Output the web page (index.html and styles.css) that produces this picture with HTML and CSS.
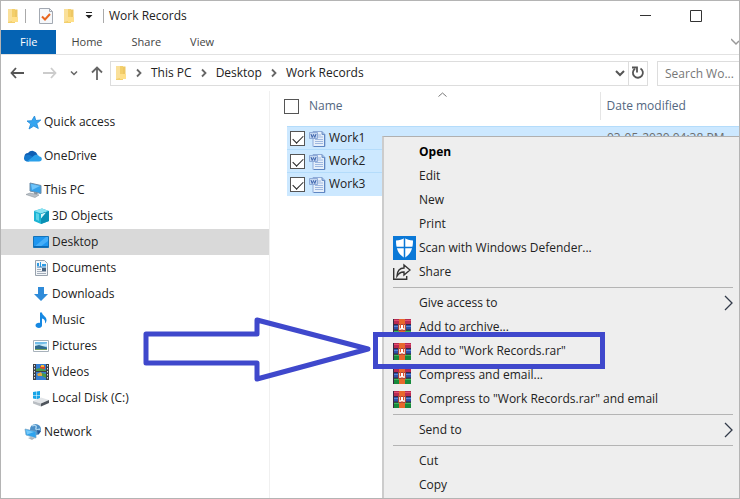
FILE: index.html
```html
<!DOCTYPE html>
<html lang="en">
<head>
    <meta charset="UTF-8">
    <meta name="viewport" content="width=device-width, initial-scale=1.0">
    <title>Work Records</title>
    <link rel="stylesheet" href="styles.css">
</head>
<body>
    <!-- shared icons -->
    <svg class="defs" width="0" height="0" aria-hidden="true">
        <symbol id="folder" viewBox="0 0 12 16">
            <path d="M1 1h7v14H1z" fill="#f3cf6b"/>
            <path d="M8 1.5h2.5v9L8 13z" fill="#eec763"/>
            <path d="M1 1h4v12L1 14z" fill="#fae09a"/>
            <path d="M5 9h6v5H5z" fill="#ffe08a"/>
        </symbol>
        <symbol id="word" viewBox="0 0 17 17">
            <path d="M4 1.5h9l3 3v12H4z" fill="#e6effa" stroke="#8fabd8"/>
            <path d="M13 1.5v3h3" fill="#9bb8e0" stroke="#6f92c8"/>
            <path d="M9 5h3M9 7h5M6 9.500h8M6 11.500h8M6 13.500h8" stroke="#9fb8e0"/>
            <path d="M15.500 5v11.500H5" fill="none" stroke="#5f86c2"/>
            <path d="M0.500 2.500h8v6h-8z" fill="#c4d6f0" stroke="#8fabd8"/>
            <path d="M2 4l1.200 3.500L4.500 4.500 5.800 7.500 7 4" fill="none" stroke="#3f66ae"/>
        </symbol>
        <symbol id="rar" viewBox="0 0 18 17">
            <path d="M0 0h18v6H0z" fill="#b92a52"/>
            <path d="M0 1h18v1H0z" fill="#e0506f"/>
            <path d="M0 6h18v5H0z" fill="#2b50a8"/>
            <path d="M0 7h18v1H0z" fill="#5b84d4"/>
            <path d="M0 11h18v6H0z" fill="#178a3c"/>
            <path d="M0 12h18v1H0z" fill="#3fb55c"/>
            <path d="M0 5.500h18M0 11h18M.5 0v17" stroke="#3b2740"/>
            <path d="M6 0h6v17H6z" fill="#e8682c"/>
            <path d="M5 5h8v7H5z" fill="#a5483c"/>
            <path d="M6 6h6v5H6z" fill="#f0d6cc"/>
            <path d="M7.500 5v4M9 7v5M10.500 5v4" stroke="#e2502c"/>
            <path d="M9 6v4" stroke="#fff" stroke-width="2"/>
        </symbol>
        <symbol id="crumb" viewBox="0 0 8 10">
            <path d="M2 1.500L5.500 5 2 8.500" fill="none" stroke="#666" stroke-width="1.800"/>
        </symbol>
        <symbol id="down" viewBox="0 0 10 8">
            <path d="M1 2l4 4 4-4" fill="none" stroke="currentColor" stroke-width="2"/>
        </symbol>
        <symbol id="more" viewBox="0 0 9 16">
            <path d="M1 1l7 7-7 7" fill="none" stroke="#333b4a" stroke-width="1.300"/>
        </symbol>
    </svg>

    <div class="window">
        <header class="titlebar">
            <svg width="12" height="16"><use href="#folder"/></svg>
            <span class="divider"></span>
            <button class="quick" aria-label="Properties">
                <svg width="14" height="16" viewBox="0 0 14 16">
                    <path d="M.5.5h10l3 3v12H.5z" fill="#f6f8fb" stroke="#a3a9b2"/>
                    <path d="M10.500.5v3h3" fill="none" stroke="#a3a9b2"/>
                    <path d="M3 8.500l3 3L11 6" fill="none" stroke="#e8661f" stroke-width="2"/>
                </svg>
            </button>
            <button class="quick" aria-label="New folder"><svg width="12" height="16"><use href="#folder"/></svg></button>
            <button class="quick" aria-label="Customize toolbar">
                <svg width="8" height="7" viewBox="0 0 8 7"><path d="M1 .5h6" stroke="#222"/><path d="M.5 3h7L4 6.500z" fill="#222"/></svg>
            </button>
            <span class="divider last"></span>
            <h1>Work Records</h1>
            <div class="controls">
                <button aria-label="Minimize"><svg width="12" height="12" viewBox="0 0 12 12"><path d="M0 5.500h11" stroke="#333"/></svg></button>
                <button aria-label="Maximize"><svg width="12" height="12" viewBox="0 0 12 12"><path d="M.5.5h11v11H.5z" fill="none" stroke="#333"/></svg></button>
            </div>
        </header>

        <nav class="tabs">
            <button class="tab file">File</button>
            <button class="tab">Home</button>
            <button class="tab">Share</button>
            <button class="tab">View</button>
            <button class="expand" aria-label="Expand ribbon">
                <svg width="8" height="8" viewBox="0 0 8 8"><path d="M0 1l5 5 3-3" fill="none" stroke="#999" stroke-width="1.500"/></svg>
            </button>
        </nav>

        <div class="toolbar">
            <div class="history">
                <button aria-label="Back"><svg width="15" height="12" viewBox="0 0 15 12"><path d="M14 6H2M6 1L1.500 6 6 11" fill="none" stroke="#555" stroke-width="1.800"/></svg></button>
                <button aria-label="Forward"><svg width="15" height="12" viewBox="0 0 15 12"><path d="M1 6h12M9 1l4.500 5L9 11" fill="none" stroke="#ccc" stroke-width="1.800"/></svg></button>
                <button aria-label="Recent locations"><svg class="recent" width="8" height="6"><use href="#down"/></svg></button>
                <button aria-label="Up"><svg width="12" height="14" viewBox="0 0 12 14"><path d="M6 14V2M1 6.500L6 1.500l5 5" fill="none" stroke="#666" stroke-width="1.800"/></svg></button>
            </div>
            <div class="address">
                <svg width="12" height="16"><use href="#folder"/></svg>
                <svg class="crumb" width="8" height="10"><use href="#crumb"/></svg>
                <a href="#">This PC</a>
                <svg class="crumb" width="8" height="10"><use href="#crumb"/></svg>
                <a href="#">Desktop</a>
                <svg class="crumb" width="8" height="10"><use href="#crumb"/></svg>
                <a href="#">Work Records</a>
                <button class="drop" aria-label="Previous locations"><svg width="10" height="8"><use href="#down"/></svg></button>
                <button class="refresh" aria-label="Refresh">
                    <svg width="14" height="14" viewBox="0 0 14 14"><path d="M9.500 2.500A5 5 0 1 1 4 2.700" fill="none" stroke="#555" stroke-width="1.800"/><path d="M1 1.500h5v5" fill="none" stroke="#555" stroke-width="1.800"/></svg>
                </button>
            </div>
            <input class="search" type="text" placeholder="Search Wo..." aria-label="Search Work Records">
        </div>

        <div class="content">
            <aside class="sidebar">
                <a href="#" class="place">
                    <svg width="18" height="18" viewBox="0 0 18 18"><path d="M10.500 3l1.300 4.500 5-.5-4 3.600 1.500 4.900-4.500-2.500L5 16l1.700-5L3 8l4.700-.3z" fill="#36a5f0" stroke="#2088d8" stroke-width=".8"/></svg>
                    Quick access
                </a>
                <a href="#" class="place group">
                    <svg width="18" height="18" viewBox="0 0 18 18"><path d="M4 13a3.500 3.500 0 0 1 0-7 5.500 5.500 0 0 1 9.500 1.500L9 12z" fill="#0f5fb4"/><path d="M2.500 14.500A3.300 3.300 0 0 1 3 8c2-.8 4 .5 6 2l-4 4.500z" fill="#1478cc"/><path d="M3 14.500L8.500 10C11 7 14 7.500 15 9.300c4 .7 3.500 5.200 0 5.200z" fill="#2aa0ea"/></svg>
                    OneDrive
                </a>
                <a href="#" class="place group">
                    <svg width="18" height="18" viewBox="0 0 18 18"><path d="M6 2l11 2.500v8L6 10z" fill="#35a1ea" stroke="#6c8ca8"/><path d="M7 3l9 2-8 4z" fill="#71c5fa"/><path d="M2 13.500l4-1.500 9 2-4 2.500z" fill="#b9c0c7" stroke="#8e979f" stroke-width=".6"/><path d="M10 11l4 1-1 1.500-3-.7z" fill="#87949f"/></svg>
                    This PC
                </a>
                <a href="#" class="place child">
                    <svg width="18" height="18" viewBox="0 0 18 18"><path d="M2 4l8-2.500L17 4v10l-8 3-7-3z" fill="#1cb4d4"/><path d="M2 4l8-2.500L17 4 9 6.500z" fill="#8be3f2"/><path d="M9 6.500L17 4v10l-8 3z" fill="#0a90b4"/><path d="M4 6l3 1v7l-3-1.500z" fill="#5bd3e8"/><path d="M9 7l5-1.500-5 6z" fill="#d8f6fa"/></svg>
                    3D Objects
                </a>
                <a href="#" class="place child selected">
                    <svg width="18" height="18" viewBox="0 0 18 18"><path d="M1.500 3.500h15v11h-15z" fill="#1e96f0" stroke="#1472b8"/><path d="M2 14L14 4h2v4L8 14z" fill="#45aef8"/><path d="M2 13.500h14" stroke="#0b68b4"/></svg>
                    Desktop
                </a>
                <a href="#" class="place child">
                    <svg width="18" height="18" viewBox="0 0 18 18"><path d="M3.500 1.500h9l3 3v12h-12z" fill="#f3f6f9" stroke="#98a2ad"/><path d="M5 4h2v3H5zM8 3h1v5H8zM10 5h4v2h-4z" fill="#2d9be4"/><path d="M5 8h9" stroke="#2d7fc0"/><path d="M5 10.500h4M5 12.500h9M5 14.500h9" stroke="#a4aebb"/><path d="M10 9h4v3h-4z" fill="#47627e"/></svg>
                    Documents
                </a>
                <a href="#" class="place child">
                    <svg width="18" height="18" viewBox="0 0 18 18"><path d="M6 2h6v7h4l-7 7-7-7h4z" fill="#2f8bd9"/></svg>
                    Downloads
                </a>
                <a href="#" class="place child">
                    <svg width="18" height="18" viewBox="0 0 18 18"><path d="M8 1.500h2c0 3 5 4 4.500 8-.2 1.500-1 2.500-1.500 3 .6-3-.8-4.500-3-5v7c0 3.500-6.500 3-6.500 0 0-2 2.500-3 4.500-2.500z" fill="#1688e2"/></svg>
                    Music
                </a>
                <a href="#" class="place child">
                    <svg width="18" height="18" viewBox="0 0 18 18"><path d="M1.500 3.500h15v11h-15z" fill="#fff" stroke="#a8b2bb"/><path d="M3 5h12v8H3z" fill="#72bde8"/><path d="M3 7l5 .5 7-1v3H3z" fill="#cbe9f6"/><path d="M3 9l4-1 8 2.500V13H3z" fill="#306b8e"/><path d="M3 12h12v1H3z" fill="#79a35c"/></svg>
                    Pictures
                </a>
                <a href="#" class="place child">
                    <svg width="18" height="18" viewBox="0 0 18 18"><path d="M1 1h16v16H1z" fill="#3c3f46"/><path d="M4 1h10v7H4zM4 9h10v8H4z" fill="#347ed2"/><path d="M8 3h5v3H8z" fill="#d9482e"/><path d="M9 2h3v2H9z" fill="#f1ba38"/><path d="M4 6l4-1 6 2v1H4z" fill="#4d9c4a"/><path d="M5 11l4-2 2 4H6z" fill="#e8a63a"/><path d="M10 10l4 1v4l-4-2z" fill="#4a9946"/><path d="M2.500 2v15M15.500 2v15" stroke="#dce2e8" stroke-dasharray="1.500 1.500"/></svg>
                    Videos
                </a>
                <a href="#" class="place child">
                    <svg width="18" height="18" viewBox="0 0 18 18"><path d="M1 3l3-.5V6H1zM4.500 2.400L8 2v4H4.500zM1 6.500h3V10l-3-.5zM4.500 6.500H8v4l-3.500-.5z" fill="#17a5e8"/><path d="M1 12l8-3.500 8 2.500-8 3.500z" fill="#e2e5e8"/><path d="M1 12l8 2.500v3L1 14.500z" fill="#b9bec3"/><path d="M9 14.500l8-3.500v3l-8 3.500z" fill="#4f555c"/></svg>
                    Local Disk (C:)
                </a>
                <a href="#" class="place group">
                    <svg width="18" height="18" viewBox="0 0 18 18"><circle cx="11.500" cy="6.500" r="5.500" fill="#4b8fc7"/><path d="M8 3c3-2 5 0 4 2s2 2 4 1" fill="none" stroke="#a9d3ee" stroke-width="1.500"/><path d="M13 7l4 1-3 4z" fill="#285a96"/><path d="M1 6l11 2.500v6.500L2 12z" fill="#2ea3ee" stroke="#78a6c6" stroke-width=".7"/><path d="M2 7l8 2-7 2.500z" fill="#76cafa"/><path d="M4 15l3-1 4 1-3 2z" fill="#aab4bd"/></svg>
                    Network
                </a>
            </aside>

            <main class="files">
                <svg class="sort" width="9" height="5" viewBox="0 0 9 5"><path d="M.5 4.500l4-3.500 4 3.500" fill="none" stroke="#777"/></svg>
                <table>
                    <thead>
                        <tr>
                            <th class="check"><input type="checkbox" aria-label="Select all"></th>
                            <th class="name">Name</th>
                            <th class="date">Date modified</th>
                        </tr>
                    </thead>
                    <tbody>
                        <tr>
                            <td class="check"><input type="checkbox" id="work1" checked></td>
                            <td class="name"><label for="work1"><svg width="17" height="17"><use href="#word"/></svg>Work1</label></td>
                            <td class="date">03-05-2020 04:38 PM</td>
                        </tr>
                        <tr>
                            <td class="check"><input type="checkbox" id="work2" checked></td>
                            <td class="name"><label for="work2"><svg width="17" height="17"><use href="#word"/></svg>Work2</label></td>
                            <td class="date"></td>
                        </tr>
                        <tr>
                            <td class="check"><input type="checkbox" id="work3" checked></td>
                            <td class="name"><label for="work3"><svg width="17" height="17"><use href="#word"/></svg>Work3</label></td>
                            <td class="date"></td>
                        </tr>
                    </tbody>
                </table>
            </main>
        </div>

        <div class="menu">
            <button class="item default">Open</button>
            <button class="item">Edit</button>
            <button class="item">New</button>
            <button class="item">Print</button>
            <button class="item has-icon">
                <svg width="24" height="24" viewBox="0 0 24 24"><path d="M0 0h23v24H0z" fill="#0a78d7"/><path d="M11.500 2c2.500 1.500 5 2.500 8.500 2.500 0 8-2 13.500-8.500 17.500C5 18 3 12.500 3 4.500 6.500 4.500 9 3.500 11.500 2z" fill="#fff"/><path d="M11.500 1v22M2 11.500h19" stroke="#0a78d7" stroke-width="1.500"/></svg>
                Scan with Windows Defender...
            </button>
            <button class="item has-icon">
                <svg width="18" height="18" viewBox="0 0 18 18"><path d="M.7 5v11.300h13V13" fill="none" stroke="#333" stroke-width="1.400"/><path d="M11 2l6 5-6 5V9c-3-.3-5 1-7 4 .3-5 3-8 7-8z" fill="none" stroke="#333" stroke-width="1.400"/></svg>
                Share
            </button>
            <hr>
            <button class="item">Give access to<svg class="arrow" width="9" height="16"><use href="#more"/></svg></button>
            <button class="item has-icon"><svg width="18" height="17"><use href="#rar"/></svg>Add to archive...</button>
            <button class="item has-icon"><svg width="18" height="17"><use href="#rar"/></svg>Add to "Work Records.rar"</button>
            <button class="item has-icon"><svg width="18" height="17"><use href="#rar"/></svg>Compress and email...</button>
            <button class="item has-icon"><svg width="18" height="17"><use href="#rar"/></svg>Compress to "Work Records.rar" and email</button>
            <hr>
            <button class="item">Send to<svg class="arrow" width="9" height="16"><use href="#more"/></svg></button>
            <hr>
            <button class="item">Cut</button>
            <button class="item">Copy</button>
        </div>

        <svg class="pointer" width="230" height="68" viewBox="0 0 230 68">
            <path d="M4 20h111V6l111 29-111 30V49H4z" fill="none" stroke="#3f48cc" stroke-width="5" stroke-linejoin="round"/>
        </svg>
        <div class="callout"></div>
    </div>
</body>
</html>
```
FILE: styles.css
```css
* { box-sizing: border-box; }
body { margin: 0; font-family: "Open Sans", "Noto Sans", sans-serif; font-size: 12px; line-height: 20px; color: #222; background: #fff; }
button { display: flex; align-items: center; margin: 0; padding: 0; border: none; background: none; font: inherit; color: inherit; }
a { color: inherit; text-decoration: none; }
svg { flex: none; display: block; }
.defs { position: absolute; }

.window { position: relative; display: flex; flex-direction: column; height: 100vh; border: 1px solid #b4b4b4; overflow: hidden; }

/* title bar */
.titlebar { display: flex; align-items: center; height: 29px; padding-left: 6px; }
.titlebar h1 { margin: 0; font-size: 12px; font-weight: normal; }
.divider { width: 1px; height: 14px; margin: 0 13px 0 6px; background: #aaa; }
.divider.last { margin: 0 5px 0 10px; }
.quick { margin-right: 10px; }
.quick:nth-of-type(3) { margin-right: 0; }
.controls { display: flex; gap: 38px; margin-left: auto; padding-right: 37px; }

/* ribbon tabs */
.tabs { display: flex; gap: 1px; height: 25px; border-bottom: 1px solid #e2e2e2; font-size: 11px; color: #444; }
.tab { padding: 0 14px; }
.tab.file { padding: 0 19px; background: #0563b3; color: #fff; }
.expand { margin-left: auto; }

/* address bar */
.toolbar { display: flex; align-items: center; height: 36px; }
.history { display: flex; align-items: center; gap: 13px; width: 109px; padding-left: 9px; }
.history button:nth-child(2) { margin-left: 4px; }
.recent { color: #666; }
.address { display: flex; flex: 1; align-items: center; height: 25px; padding-left: 4px; border: 1px solid #ddd; }
.crumb { margin: 0 8px; }
.address a { white-space: nowrap; }
.drop { margin-left: auto; margin-right: 3px; color: #555; }
.refresh { justify-content: center; width: 19px; height: 23px; border-left: 1px solid #ddd; }
.search { width: 82px; height: 25px; margin-left: 9px; padding: 0 0 0 7px; border: 1px solid #ddd; border-right: none; font: inherit; }
.search::placeholder { color: #777; }

.content { display: flex; flex: 1; }

/* places */
.sidebar { width: 269px; padding-top: 18px; border-right: 1px solid #f0f0f0; }
.place { display: flex; align-items: center; gap: 2px; height: 26px; padding-left: 23px; }
.place.group { margin-top: 8px; }
.place.child { padding-left: 31px; }
.place.selected { background: #d9d9d9; }

/* file list */
.files { flex: 1; position: relative; padding: 1px 0 0 17px; }
.sort { position: absolute; top: 1px; left: 168px; }
table { width: 100%; table-layout: fixed; border-collapse: collapse; }
th, td { padding: 0; font-weight: normal; text-align: left; white-space: nowrap; }
th { height: 28px; color: #53677f; }
td { height: 23px; background: #cce8ff; }
tbody tr { border-top: 1px solid #b4dcfb; }
thead::after { content: ""; display: block; height: 6px; }
.check { width: 22px; }
td.check { padding-left: 3px; }
th.date { padding-left: 6px; border-left: 1px solid #e5e5e5; }
td.date { padding-left: 7px; color: #6d6d6d; }
.date { width: 139px; }
label { display: flex; align-items: center; gap: 3px; }
input[type="checkbox"] { display: block; position: relative; appearance: none; width: 15px; height: 15px; margin: 0; border: 1px solid #555; background: #fff; }
th input[type="checkbox"] { margin-left: -3px; }
input[type="checkbox"]:checked::before { content: ""; display: block; width: 9px; height: 5px; margin: 3px 2px; border-left: 1px solid #222; border-bottom: 1px solid #222; transform: rotate(-45deg); }

/* context menu */
.menu { position: absolute; top: 135px; left: 381px; right: 0; bottom: 0; padding: 3px 6px 0 9px; border-left: 2px solid #ccc; border-top: 1px solid #b0b0b0; background: #eee; overflow: hidden; }
.item { width: 100%; height: 24px; padding-left: 26px; white-space: nowrap; }
.item.has-icon { padding-left: 0; }
.item.has-icon svg { margin-right: 8px; }
.item.has-icon svg[width="24"] { margin-right: 2px; }
.item.default { font-weight: bold; color: #000; }
.item .arrow { margin-left: auto; }
.menu hr { height: 1px; margin: 3px 0; border: none; background: #b4b4b4; }

/* annotations */
.pointer { position: absolute; top: 313px; left: 141px; }
.callout { position: absolute; top: 331px; left: 372px; width: 232px; height: 37px; border: 5px solid #3f48cc; }
```
